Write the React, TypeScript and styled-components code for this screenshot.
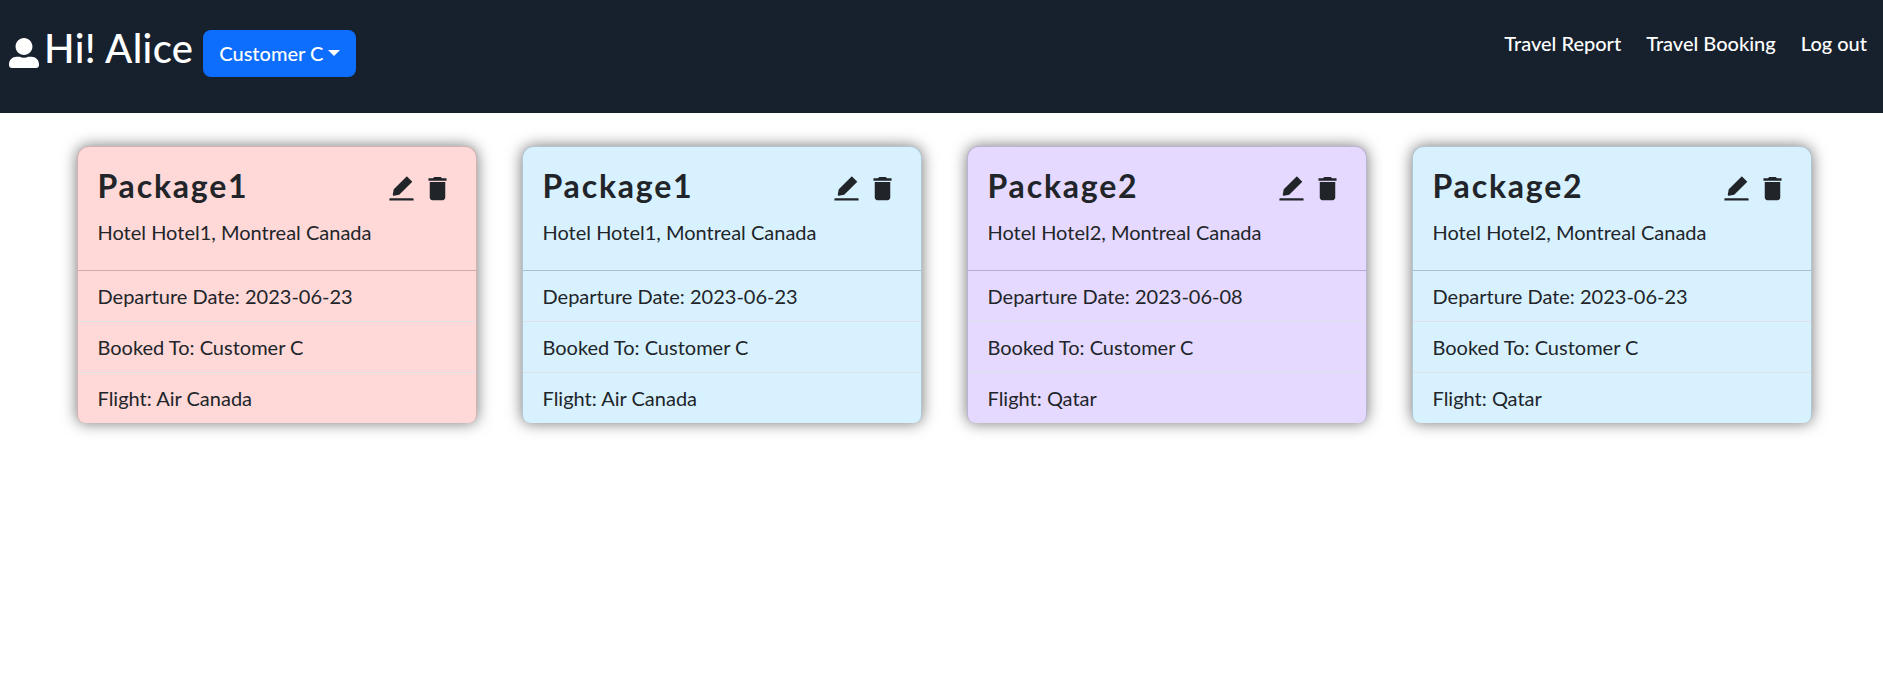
import React from "react";
import styled, { createGlobalStyle } from "styled-components";
import { FaUserAlt } from "react-icons/fa";
import { AiFillEdit } from "react-icons/ai";
import { MdDelete } from "react-icons/md";

const GlobalStyle = createGlobalStyle`
  *, *::before, *::after { box-sizing: border-box; }
  body {
    margin: 0;
    background: #fff;
    color: #212529;
    font-family: Lato, "Liberation Sans", sans-serif;
    font-size: 20px;
    line-height: 1.5;
  }
`;

const Page = styled.div`
  min-height: 100vh;
`;

const Header = styled.header`
  display: flex;
  justify-content: space-between;
  align-items: flex-start;
  height: 113px;
  padding: 23px 16px 0 9px;
  background: #17212d;
  color: #fff;
`;

const Account = styled.div`
  display: flex;
  align-items: flex-start;
`;

const UserIcon = styled(FaUserAlt)`
  flex: none;
  width: 30px;
  height: 30px;
  margin: 15px 5px 0 0;
`;

const Greeting = styled.h1`
  margin: 1px 10px 0 0;
  font-size: 40px;
  font-weight: 500;
  line-height: 48px;
  letter-spacing: 0.35px;
`;

const CustomerButton = styled.button`
  display: flex;
  align-items: center;
  gap: 5px;
  height: 47px;
  margin-top: 7px;
  padding: 0 16px 1px;
  border: 0;
  border-radius: 8px;
  background: #0d6efd;
  color: #fff;
  font: inherit;
  font-weight: 500;
`;

const Caret = styled.span`
  border-top: 6px solid;
  border-right: 6px solid transparent;
  border-left: 6px solid transparent;
`;

const Nav = styled.nav`
  display: flex;
  gap: 25px;
  margin-top: 5px;
  font-weight: 500;
`;

const NavLink = styled.a`
  color: #fff;
`;

const Packages = styled.main`
  display: grid;
  grid-template-columns: repeat(4, 400px);
  column-gap: 45px;
  padding: 33px 0 0 77px;
`;

const Card = styled.article<{ $tone: string }>`
  border: 1px solid rgba(0, 0, 0, 0.176);
  border-bottom: 0;
  border-radius: 12px 12px 8px 8px;
  background: ${({ $tone }) => $tone};
  box-shadow: 0 0 15px rgba(0, 0, 0, 0.55);
`;

const CardTop = styled.div`
  height: 124px;
  padding: 20px 19.5px;
  border-bottom: 1px solid rgba(0, 0, 0, 0.2);
`;

const TitleRow = styled.div`
  display: flex;
  justify-content: space-between;
`;

const Title = styled.h2`
  margin: 0;
  font-size: 32px;
  font-weight: 700;
  line-height: 38px;
  letter-spacing: 1.8px;
`;

const Actions = styled.div`
  display: flex;
  gap: 5px;
  height: 32px;
  margin: 6px 3.5px 0 0;

  svg {
    width: 31px;
    height: 31px;
  }
`;

const Hotel = styled.p`
  margin: 0;
  padding-top: 12px;
`;

const Details = styled.ul`
  margin: 0;
  padding: 0;
  list-style: none;
`;

const Detail = styled.li`
  padding: 10px 19.5px;

  & + & {
    border-top: 1px solid #dee2e6;
  }
`;

const packages = [
  { name: "Package1", hotel: "Hotel1", date: "2023-06-23", flight: "Air Canada", tone: "#ffd8d8" },
  { name: "Package1", hotel: "Hotel1", date: "2023-06-23", flight: "Air Canada", tone: "#d8f1ff" },
  { name: "Package2", hotel: "Hotel2", date: "2023-06-08", flight: "Qatar", tone: "#e5d9ff" },
  { name: "Package2", hotel: "Hotel2", date: "2023-06-23", flight: "Qatar", tone: "#d8f1ff" },
];

export default function App() {
  return (
    <Page>
      <GlobalStyle />
      <Header>
        <Account>
          <UserIcon />
          <Greeting>Hi! Alice</Greeting>
          <CustomerButton>
            Customer C<Caret />
          </CustomerButton>
        </Account>
        <Nav>
          <NavLink>Travel Report</NavLink>
          <NavLink>Travel Booking</NavLink>
          <NavLink>Log out</NavLink>
        </Nav>
      </Header>
      <Packages>
        {packages.map((item, index) => (
          <Card key={index} $tone={item.tone}>
            <CardTop>
              <TitleRow>
                <Title>{item.name}</Title>
                <Actions>
                  <AiFillEdit />
                  <MdDelete />
                </Actions>
              </TitleRow>
              <Hotel>Hotel {item.hotel}, Montreal Canada</Hotel>
            </CardTop>
            <Details>
              <Detail>Departure Date: {item.date}</Detail>
              <Detail>Booked To: Customer C</Detail>
              <Detail>Flight: {item.flight}</Detail>
            </Details>
          </Card>
        ))}
      </Packages>
    </Page>
  );
}
